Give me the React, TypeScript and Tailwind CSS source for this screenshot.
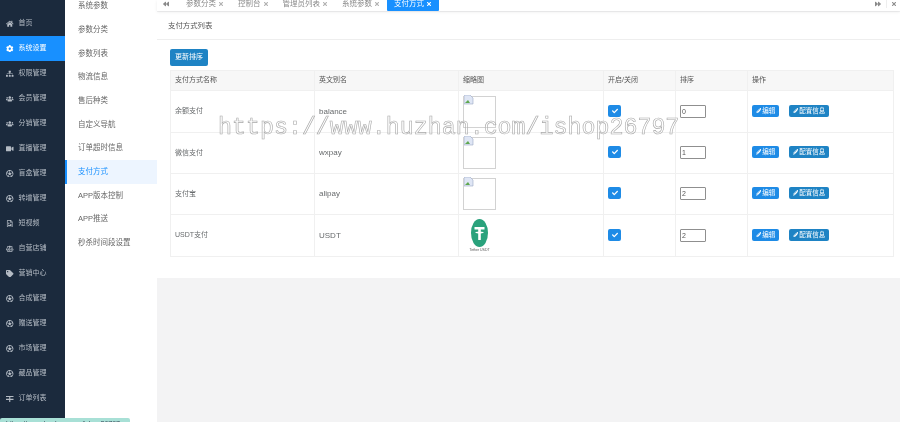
import { FaHome, FaCog, FaSitemap, FaUsers, FaVideo, FaRegFutbol, FaRegFileImage, FaBalanceScale, FaTag, FaCheck, FaPencilAlt, FaTimes, FaBackward, FaForward } from "react-icons/fa";

function OrderIcon({ size }: { size: number }) {
  return (
    <svg viewBox="0 0 8 8" width={size} height={size} className="shrink-0" fill="currentColor">
      <path d="M0 1h8v1.200H0zM0 4h8v1.200H0zM3.400 1h1.200v7H3.400z" />
    </svg>
  );
}

const side: [any, string][] = [
  [FaHome, "首页"], [FaCog, "系统设置"], [FaSitemap, "权限管理"], [FaUsers, "会员管理"], [FaUsers, "分销管理"], [FaVideo, "直播管理"],
  [FaRegFutbol, "盲盒管理"], [FaRegFutbol, "转增管理"], [FaRegFileImage, "短视频"], [FaBalanceScale, "自营店铺"], [FaTag, "营销中心"],
  [FaRegFutbol, "合成管理"], [FaRegFutbol, "赠送管理"], [FaRegFutbol, "市场管理"], [FaRegFutbol, "藏品管理"], [OrderIcon, "订单列表"],
];
const sub = ["系统参数", "参数分类", "参数列表", "物流信息", "售后种类", "自定义导航", "订单超时信息", "支付方式", "APP版本控制", "APP推送", "秒杀时间段设置"];
const tabs = ["参数分类", "控制台", "管理员列表", "系统参数"];
const rows = [
  { n: "余额支付", e: "balance", s: "0", h: "h-[42px]" },
  { n: "微信支付", e: "wxpay", s: "1", h: "h-[41px]" },
  { n: "支付宝", e: "alipay", s: "2", h: "h-[41px]" },
  { n: "USDT支付", e: "USDT", s: "2", h: "h-[42px]", usdt: true },
];

function Broken() {
  return (
    <div className="relative w-[33px] h-[32px] border border-[#d2d2d2] bg-white">
      <svg viewBox="0 0 10 10" className="absolute left-0 -top-[2px] w-[10px] h-[10px]">
        <path d="M0 0h6l3 3v6H0z" fill="#dfe6f5" stroke="#9aa8c4" strokeWidth="0.6" />
        <path d="M1 8l3-3 2 3z" fill="#5fa84f" />
      </svg>
    </div>
  );
}

function Usdt() {
  return (
    <div className="w-[33px] h-[38px] flex flex-col items-center pt-[2px]">
      <svg viewBox="0 0 17 28" className="w-[17px] h-[28px] shrink-0">
        <ellipse cx="8.500" cy="14" rx="8.500" ry="14" fill="#2aa27c" />
        <path d="M3.500 8h10v2.400H9.800v2.300c1.700.1 3 .4 3 .9s-1.300.8-3 .9V21H7.200v-6.500c-1.700-.1-3-.4-3-.9s1.300-.8 3-.9v-2.300H3.500z" fill="#fff" />
      </svg>
      <span className="text-[3.500px] leading-[5px] mt-[1px] text-[#555] whitespace-nowrap">Tether USDT</span>
    </div>
  );
}

export default function App() {
  return (
    <div className="relative flex w-[900px] h-[422px] overflow-hidden bg-[#f3f3f4] text-[7px] text-[#676a6c] blur-[0.35px] font-['Liberation_Sans','Noto_Sans_CJK_SC',sans-serif]">
      {/* main sidebar */}
      <aside className="w-[65px] shrink-0 bg-[#1b2a3d] pt-[11px] flex flex-col">
        {side.map(([I, t], i) => (
          <div key={t + i} className={`h-[25px] shrink-0 flex items-center gap-[5px] pl-[6px] ${i === 1 ? "bg-[#1890ff] text-white" : "text-[#b4bbc4]"}`}>
            <I size={7.500} className="shrink-0" />
            <span>{t}</span>
          </div>
        ))}
      </aside>

      {/* secondary menu */}
      <nav className="w-[92px] shrink-0 bg-white flex flex-col -mt-[6px] text-[7.500px] text-[#666]">
        {sub.map((t, i) => (
          <div key={t} className={`h-[23.700px] shrink-0 flex items-center pl-[11px] border-l-2 ${i === 7 ? "bg-[#edf5ff] text-[#1890ff] border-[#1890ff]" : "border-transparent"}`}>
            {t}
          </div>
        ))}
      </nav>

      {/* content */}
      <main className="flex-1 min-w-0 flex flex-col">
        <div className="h-[11px] bg-white flex items-start overflow-visible shadow-[0_1px_3px_rgba(0,0,0,0.08)] text-[#8a8a8a] text-[7.500px] leading-[7px] relative">
          <div className="w-[18px] h-full flex items-center justify-center pb-[3px]"><FaBackward size={6} /></div>
          <div className="flex items-center gap-[14px] ml-[11px] h-[7px]">
            {tabs.map((t) => (
              <span key={t} className="flex items-center gap-[2px] whitespace-nowrap">{t}<FaTimes size={6} className="text-[#b0b0b0]" /></span>
            ))}
          </div>
          <div className="ml-[7px] h-full w-[52px] bg-[#1890ff] text-white flex items-start pt-0 justify-center gap-[2px] rounded-b-[1px] whitespace-nowrap">
            支付方式<FaTimes size={6} className="mt-[1px]" />
          </div>
          <div className="ml-auto flex items-center h-full pb-[3px]">
            <div className="w-[18px] h-full flex items-center justify-center border-r border-[#eee]"><FaForward size={6} /></div>
            <div className="w-[13px] flex justify-center"><FaTimes size={6} /></div>
          </div>
        </div>

        <section className="h-[266px] mt-px bg-white flex flex-col">
          <h2 className="h-[28px] border-b border-[#eee] flex items-center pl-[11px] pt-[1px] text-[7.400px] font-normal text-[#555] shrink-0">支付方式列表</h2>
          <div className="pl-[13px] pt-[9px]">
            <button className="w-[38px] h-[17px] rounded-[2px] bg-[#1e83c4] text-white text-[7px] flex items-center justify-center">更新排序</button>
            <table className="mt-[4px] w-[723px] table-fixed border-collapse text-left">
              <colgroup>
                <col className="w-[144px]" /><col className="w-[144px]" /><col className="w-[145px]" /><col className="w-[72px]" /><col className="w-[72px]" /><col className="w-[146px]" />
              </colgroup>
              <thead>
                <tr className="h-[20px] bg-[#f7f7f7]">
                  {["支付方式名称", "英文别名", "缩略图", "开启/关闭", "排序", "操作"].map((h) => (
                    <th key={h} className="font-normal text-[#555] pl-[4px] border border-[#f0f0f0]">{h}</th>
                  ))}
                </tr>
              </thead>
              <tbody>
                {rows.map((r) => (
                  <tr key={r.n} className={r.h}>
                    <td className="pl-[4px] border border-[#f0f0f0]">{r.n}</td>
                    <td className="pl-[4px] border border-[#f0f0f0] text-[8px]">{r.e}</td>
                    <td className="pl-[4px] border border-[#f0f0f0]">{r.usdt ? <Usdt /> : <Broken />}</td>
                    <td className="pl-[4px] border border-[#f0f0f0]">
                      <span className="w-[13px] h-[12px] -mt-[2px] rounded-[2px] bg-[#1e8be6] flex items-center justify-center text-white">
                        <FaCheck size={6} />
                      </span>
                    </td>
                    <td className="pl-[4px] border border-[#f0f0f0]">
                      <input readOnly value={r.s} className="block w-[26px] h-[13px] -mt-[1px] border border-[#8f8f8f] rounded-[1px] pl-[1px] text-[7px] text-[#555] bg-white outline-none" />
                    </td>
                    <td className="pl-[4px] border border-[#f0f0f0]">
                      <div className="flex items-center gap-[10px] -mt-[2px]">
                        <span className="w-[27px] h-[12px] rounded-[2px] bg-[#1e8be6] text-white flex items-center justify-center gap-[1px] text-[6.500px]"><FaPencilAlt size={5.500} />编辑</span>
                        <span className="w-[40px] h-[12px] rounded-[2px] bg-[#1e83c4] text-white flex items-center justify-center gap-[1px] text-[6.500px]"><FaPencilAlt size={5.500} />配置信息</span>
                      </div>
                    </td>
                  </tr>
                ))}
              </tbody>
            </table>
          </div>
        </section>
      </main>

      {/* watermark overlay */}
      <div className="absolute left-[218px] top-[113px] text-[23.300px] leading-[30px] whitespace-nowrap font-['Liberation_Mono',monospace] text-white/30 [-webkit-text-stroke:0.6px_#a8a8a8]">
        https://www.huzhan.com/ishop26797
      </div>

      {/* clipped tooltip at bottom */}
      <div className="absolute left-0 top-[418px] w-[130px] h-[10px] rounded-[2px] bg-[#a8e0d6] text-[7px] leading-[8px] text-[#345] pl-[6px] pt-[2px] whitespace-nowrap overflow-hidden">
        https://www.huzhan.com/ishop26797
      </div>
    </div>
  );
}
